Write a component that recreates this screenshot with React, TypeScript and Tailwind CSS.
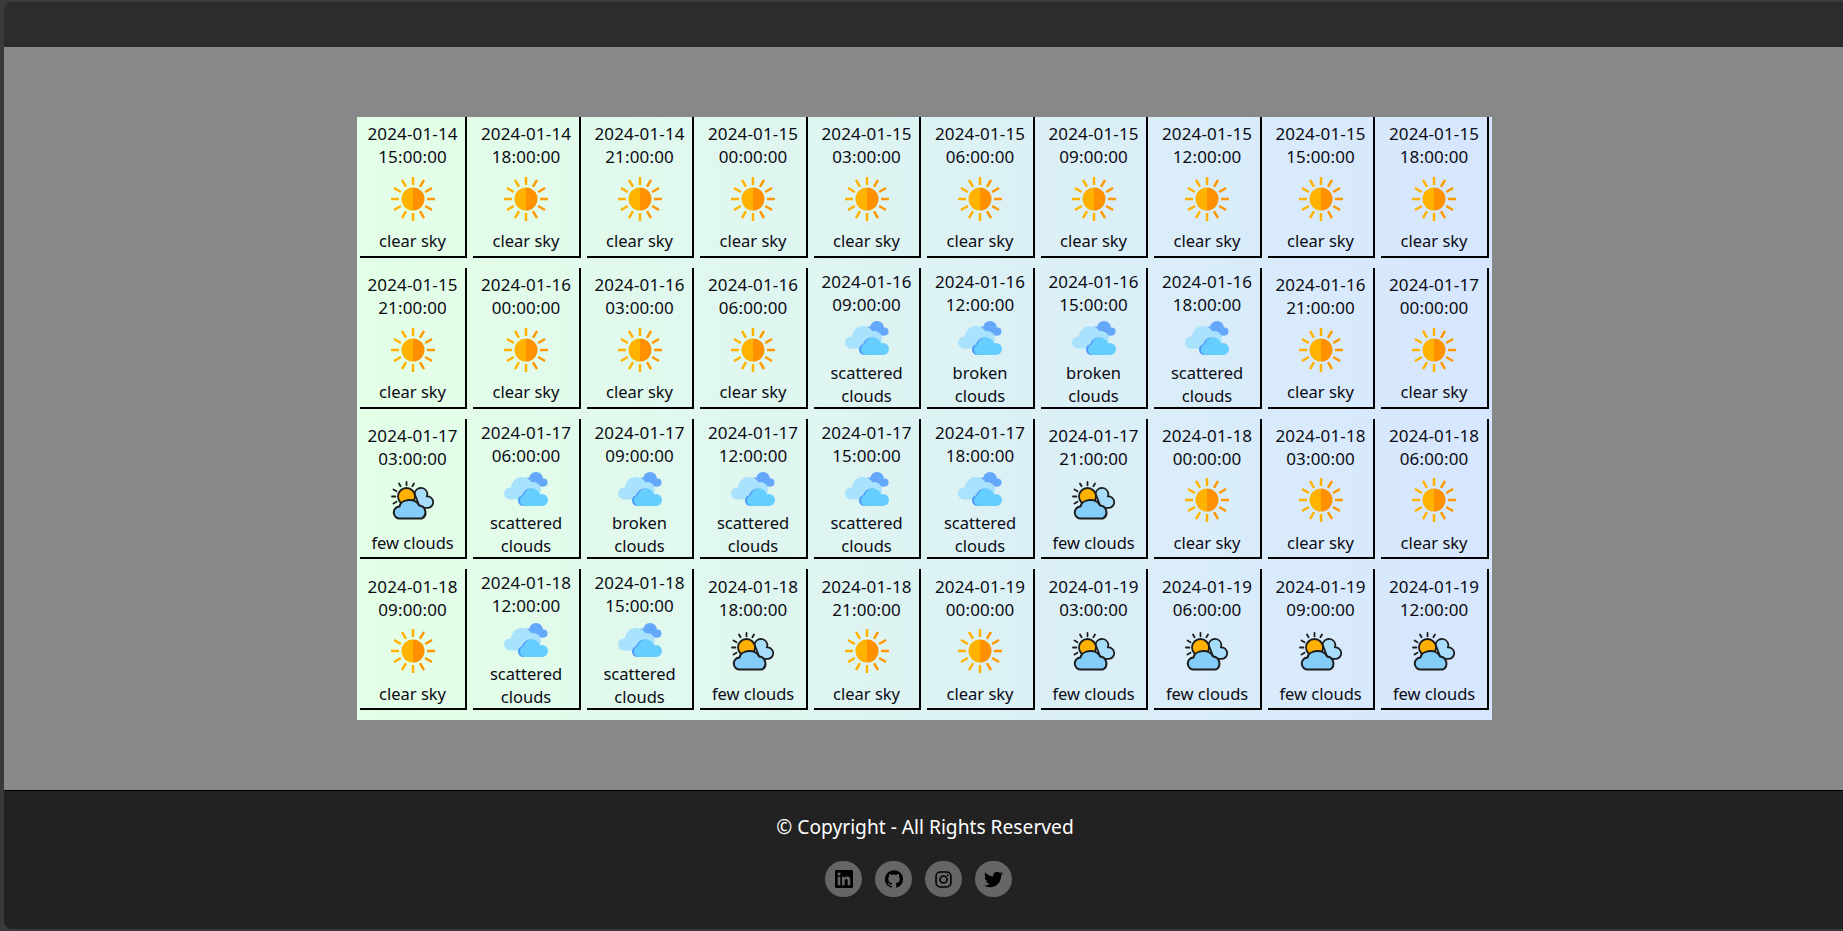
const SUN = "sun";
const SCATTER = "scatter";
const FEW = "few";

type Cell = { date: string; time: string; desc: string; icon: string };

const raw: [string, string, string][] = [
  ["2024-01-14", "15:00:00", "c"], ["2024-01-14", "18:00:00", "c"], ["2024-01-14", "21:00:00", "c"], ["2024-01-15", "00:00:00", "c"], ["2024-01-15", "03:00:00", "c"],
  ["2024-01-15", "06:00:00", "c"], ["2024-01-15", "09:00:00", "c"], ["2024-01-15", "12:00:00", "c"], ["2024-01-15", "15:00:00", "c"], ["2024-01-15", "18:00:00", "c"],
  ["2024-01-15", "21:00:00", "c"], ["2024-01-16", "00:00:00", "c"], ["2024-01-16", "03:00:00", "c"], ["2024-01-16", "06:00:00", "c"], ["2024-01-16", "09:00:00", "s"],
  ["2024-01-16", "12:00:00", "b"], ["2024-01-16", "15:00:00", "b"], ["2024-01-16", "18:00:00", "s"], ["2024-01-16", "21:00:00", "c"], ["2024-01-17", "00:00:00", "c"],
  ["2024-01-17", "03:00:00", "f"], ["2024-01-17", "06:00:00", "s"], ["2024-01-17", "09:00:00", "b"], ["2024-01-17", "12:00:00", "s"], ["2024-01-17", "15:00:00", "s"],
  ["2024-01-17", "18:00:00", "s"], ["2024-01-17", "21:00:00", "f"], ["2024-01-18", "00:00:00", "c"], ["2024-01-18", "03:00:00", "c"], ["2024-01-18", "06:00:00", "c"],
  ["2024-01-18", "09:00:00", "c"], ["2024-01-18", "12:00:00", "s"], ["2024-01-18", "15:00:00", "s"], ["2024-01-18", "18:00:00", "f"], ["2024-01-18", "21:00:00", "c"],
  ["2024-01-19", "00:00:00", "c"], ["2024-01-19", "03:00:00", "f"], ["2024-01-19", "06:00:00", "f"], ["2024-01-19", "09:00:00", "f"], ["2024-01-19", "12:00:00", "f"],
];

const labels: Record<string, { desc: string; icon: string }> = {
  c: { desc: "clear sky", icon: SUN },
  s: { desc: "scattered clouds", icon: SCATTER },
  b: { desc: "broken clouds", icon: SCATTER },
  f: { desc: "few clouds", icon: FEW },
};

const cells: Cell[] = raw.map(([date, time, k]) => ({ date, time, ...labels[k] }));

function SunIcon() {
  const rays = [0, 30, 60, 90, 120, 150, 180, 210, 240, 270, 300, 330];
  return (
    <svg width="44" height="44" viewBox="0 0 44 44">
      {rays.map((a) => (
        <rect key={a} x="20.75" y="0" width="2.5" height="8" rx="0.5" fill={a > 0 && a < 180 ? "#ff9800" : "#ffb300"} transform={`rotate(${a} 22 22)`} />
      ))}
      <path d="M22 10.500a11.500 11.500 0 0 0 0 23z" fill="#ffb300" />
      <path d="M22 10.500a11.500 11.500 0 0 1 0 23z" fill="#ff9100" />
    </svg>
  );
}

function ScatterIcon() {
  return (
    <svg width="44" height="34" viewBox="0 0 44 34">
      <g fill="#64a8fb">
        <circle cx="32" cy="7" r="7" />
        <circle cx="24" cy="10" r="4.500" />
        <circle cx="39.500" cy="10.500" r="4" />
        <rect x="22" y="8" width="18" height="6.500" />
      </g>
      <g fill="#a9e2fd">
        <circle cx="18" cy="16" r="11" />
        <circle cx="6" cy="21.500" r="6" />
        <circle cx="29" cy="18" r="8" />
        <rect x="6" y="18" width="28" height="9.500" />
      </g>
      <g fill="#4f9bfb">
        <circle cx="26.500" cy="25" r="8.500" />
        <circle cx="19.500" cy="28.500" r="5.500" />
      </g>
      <g fill="#66cdff">
        <circle cx="28" cy="25" r="8.500" />
        <circle cx="21.500" cy="28.500" r="5.500" />
        <circle cx="38" cy="28" r="6" />
        <rect x="21" y="26" width="17" height="8" />
      </g>
    </svg>
  );
}

function FewIcon() {
  return (
    <svg width="44" height="39" viewBox="0 0 44 39">
      <g stroke="#1c1c1c" strokeWidth="1.800" strokeLinecap="round">
        <path d="M15.500 0.900v3.400M8 2.500l1.600 2.800M23 2.500l-1.600 2.800M1 15.500h3.400M2.500 8.500l3 1.700M2.500 22.500l3-1.700" />
      </g>
      <path d="M23.500 12.500a6.500 6.500 0 0 1 12.800-.3c.2 1.100 0 2.200-.5 3.200a5.800 5.800 0 0 1 1.500 11.500H29z" fill="#a8dcfb" stroke="#1c1c1c" strokeWidth="1.800" strokeLinejoin="round" />
      <circle cx="15.500" cy="15.500" r="8.500" fill="#ffb000" stroke="#1c1c1c" strokeWidth="1.800" />
      <path d="M9 37.500a6 6 0 0 1-.5-12a10 7.500 0 0 1 19.500-1a7 7 0 0 1 3 13z" fill="#84cdf8" stroke="#1c1c1c" strokeWidth="2" strokeLinejoin="round" />
    </svg>
  );
}

function WeatherCell({ cell }: { cell: Cell }) {
  const scattered = cell.icon === SCATTER;
  return (
    <div className="h-[140.75px] border-r-2 border-b-2 border-black flex flex-col items-center justify-center text-center text-[16.5px] leading-[23px] text-[#0b0b14]">
      <div className="pt-[2px] text-[17px] tracking-[0.15px]">
        <div>{cell.date}</div>
        <div>{cell.time}</div>
      </div>
      <div className={scattered ? "h-[46px] flex items-center justify-center" : "h-[61px] flex items-center justify-center"}>
        {cell.icon === SUN && <SunIcon />}
        {cell.icon === SCATTER && <ScatterIcon />}
        {cell.icon === FEW && <FewIcon />}
      </div>
      <div className="w-[90px]">{cell.desc}</div>
    </div>
  );
}

function Social({ children }: { children: React.ReactNode }) {
  return <div className="w-[37px] h-[36px] rounded-full bg-[#666666] flex items-center justify-center">{children}</div>;
}

export default function App() {
  return (
    <div className="h-[931px] bg-[#3a3a3a] pl-1 pt-0.5 pb-0.5 flex flex-col font-['Noto_Sans',sans-serif]">
      <div className="h-[45px] bg-[#2c2c2c] rounded-tl-lg" />
      <main className="flex-1 bg-[#888888] pt-[70px] pl-[353px]">
        <div className="w-[1135px] h-[603px] bg-gradient-to-r from-[#e4ffe6] to-[#d6e6ff]">
          <div className="grid grid-cols-10 gap-x-[6px] gap-y-[10px] pl-[2.8px] pr-[3.2px]">
            {cells.map((c) => (
              <WeatherCell key={c.date + c.time} cell={c} />
            ))}
          </div>
        </div>
      </main>
      <footer className="h-[139px] bg-[#222222] border-t border-black rounded-bl-lg flex flex-col items-center text-white">
        <p className="mt-[23px] pl-[3px] text-[19.2px] leading-[26px]">© Copyright - All Rights Reserved</p>
        <div className="mt-[21px] mr-[10px] flex gap-[13px]">
          <Social>
            <svg width="18" height="18" viewBox="0 0 24 24" fill="#000"><path d="M20.450 20.450h-3.550v-5.570c0-1.330-.03-3.040-1.850-3.040-1.860 0-2.140 1.450-2.140 2.940v5.670H9.350V9h3.410v1.560h.05c.480-.9 1.640-1.850 3.370-1.850 3.600 0 4.270 2.370 4.270 5.460v6.280zM5.340 7.430a2.060 2.060 0 1 1 0-4.120 2.060 2.060 0 0 1 0 4.120zM7.120 20.450H3.560V9h3.560v11.450zM22.220 0H1.770C.79 0 0 .770 0 1.730v20.540C0 23.230.790 24 1.770 24h20.450c.98 0 1.780-.770 1.780-1.730V1.730C24 .770 23.200 0 22.220 0z" /></svg>
          </Social>
          <Social>
            <svg width="18" height="18" viewBox="0 0 24 24" fill="#000"><path d="M12 .300a12 12 0 0 0-3.800 23.400c.6.110.82-.260.82-.580v-2.030c-3.340.730-4.040-1.610-4.040-1.610-.55-1.390-1.330-1.760-1.330-1.760-1.090-.740.080-.730.080-.730 1.200.090 1.840 1.240 1.840 1.240 1.070 1.830 2.810 1.300 3.490 1 .110-.780.420-1.310.760-1.610-2.670-.3-5.470-1.330-5.470-5.930 0-1.310.470-2.380 1.240-3.220-.140-.3-.540-1.520.100-3.180 0 0 1.010-.320 3.300 1.230a11.500 11.500 0 0 1 6 0c2.280-1.550 3.290-1.230 3.290-1.230.640 1.660.240 2.880.120 3.180a4.650 4.650 0 0 1 1.230 3.220c0 4.610-2.800 5.630-5.480 5.920.420.360.810 1.100.81 2.220v3.290c0 .320.210.690.820.570A12 12 0 0 0 12 .300z" /></svg>
          </Social>
          <Social>
            <svg width="17" height="17" viewBox="0 0 24 24" fill="none" stroke="#000" strokeWidth="2.200"><rect x="1.500" y="1.500" width="21" height="21" rx="6" /><circle cx="12" cy="12" r="5" /><circle cx="18" cy="6" r="1.300" fill="#000" stroke="none" /></svg>
          </Social>
          <Social>
            <svg width="19" height="19" viewBox="0 0 24 24" fill="#000"><path d="M23.950 4.570a10 10 0 0 1-2.820.770 4.960 4.960 0 0 0 2.160-2.720c-.950.550-2 .950-3.130 1.180a4.920 4.920 0 0 0-8.380 4.480C7.690 8.090 4.070 6.130 1.640 3.160a4.820 4.820 0 0 0-.670 2.480c0 1.710.870 3.210 2.190 4.100a4.900 4.900 0 0 1-2.230-.620v.060a4.920 4.920 0 0 0 3.950 4.830 5 5 0 0 1-2.210.080 4.940 4.940 0 0 0 4.600 3.420A9.870 9.870 0 0 1 0 19.540a14 14 0 0 0 7.560 2.210c9.050 0 14-7.500 14-13.980 0-.210 0-.420-.020-.630a9.940 9.940 0 0 0 2.460-2.550z" /></svg>
          </Social>
        </div>
      </footer>
    </div>
  );
}
